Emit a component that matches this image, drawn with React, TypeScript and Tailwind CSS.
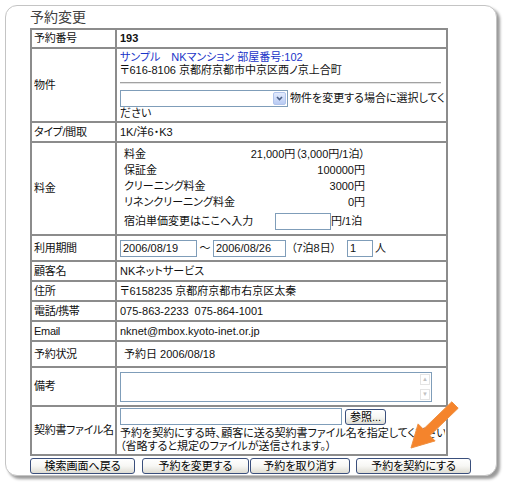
import type { ReactNode } from 'react';

const Btn = ({ children, className }: { children: ReactNode; className: string }) => (
  <button
    className={`h-[16px] shrink-0 whitespace-nowrap rounded-[3px] border border-[#3a4f7c] bg-linear-to-b from-white via-[#f7f7f4] to-[#dedcd3] text-[11px] leading-[14px] text-black ${className}`}
  >
    {children}
  </button>
);

const Row = ({
  label,
  h,
  valueClass,
  children,
}: {
  label: string;
  h: string;
  valueClass?: string;
  children: ReactNode;
}) => (
  <tr>
    <td className={`${h} w-[85px] whitespace-nowrap border border-[#8c8c8c] px-[2px] align-middle tracking-[-0.3px]`}>{label}</td>
    <td className={`border border-[#8c8c8c] px-[3px] ${valueClass ?? 'align-middle'}`}>{children}</td>
  </tr>
);

const fees = [
  ['料金', '21,000円（3,000円/1泊）'],
  ['保証金', '100000円'],
  ['クリーニング料金', '3000円'],
  ['リネンクリーニング料金', '0円'],
];

const inputCls = 'h-[17px] shrink-0 border border-[#7f9db9] bg-white px-[2px] text-[11px] leading-[15px] outline-none';

const App = () => {
  return (
    <div className="relative h-[484px] w-[505px] overflow-hidden bg-white pl-[5px] pt-[5px] font-['Liberation_Sans','Noto_Sans_CJK_JP',sans-serif] text-[11px] leading-[13px] text-[#111] [font-feature-settings:'palt']">
      <div className="h-[471px] w-[492px] rounded-[12px] border border-[#c4c4c4] bg-white pl-[24px] shadow-[3px_3px_3px_#9a9a9a]">
        <div className="h-[22px] text-[14px] leading-[22px] text-[#404040]">予約変更</div>

        <table className="w-[418px] table-fixed border-separate border-spacing-0 border border-[#8c8c8c]">
          <tbody>
            <Row label="予約番号" h="h-[19px]">
              <span className="font-bold">193</span>
            </Row>
            <Row label="物件" h="h-[74px]" valueClass="align-top pt-[2px]">
              <div className="text-[#1a34c8]">サンプル　NKマンション 部屋番号:102</div>
              <div>〒616-8106 京都府京都市中京区西ノ京上合町</div>
              <div className="mt-[5px] mr-[2px] border-t border-b border-t-[#a2a2a2] border-b-[#e2e2e2]" />
              <div className="mt-[6px] flex items-center whitespace-nowrap">
                <div className="flex h-[17px] w-[168px] shrink-0 border border-[#7f9db9] bg-white">
                  <div className="flex-1" />
                  <div className="m-px flex w-[13px] items-center justify-center rounded-[2px] border border-[#b1c4ec] bg-linear-to-b from-[#e3ebfd] to-[#b9cbf3]">
                    <svg width="7" height="5" viewBox="0 0 7 5">
                      <path d="M1 1 L3.5 3.6 L6 1" fill="none" stroke="#4a5f86" strokeWidth="1.6" />
                    </svg>
                  </div>
                </div>
                <span className="ml-[2px]">物件を変更する場合に選択してく</span>
              </div>
              <div>ださい</div>
            </Row>
            <Row label="タイプ/間取" h="h-[20px]">
              1K/洋6・K3
            </Row>
            <Row label="料金" h="h-[93px]">
              <div className="ml-[4px] flex flex-col whitespace-nowrap">
                {fees.map(([k, v]) => (
                  <div key={k} className="flex h-[16px] items-center">
                    <span className="w-[127px] shrink-0">{k}</span>
                    <span className="flex w-[114px] shrink-0 justify-end">{v}</span>
                  </div>
                ))}
                <div className="mt-[1px] flex h-[19px] items-center">
                  <span className="w-[127px] shrink-0">宿泊単価変更はここへ入力</span>
                  <input readOnly className={`${inputCls} ml-[24px] w-[56px]`} />
                  <span>円/1泊</span>
                </div>
              </div>
            </Row>
            <Row label="利用期間" h="h-[26px]">
              <div className="flex items-center whitespace-nowrap">
                <input readOnly value="2006/08/19" className={`${inputCls} w-[77px]`} />
                <span className="w-[16px] shrink-0 text-center">～</span>
                <input readOnly value="2006/08/26" className={`${inputCls} w-[73px]`} />
                <span className="w-[61px] shrink-0 pl-[5px]">（7泊8日）</span>
                <input readOnly value="1" className={`${inputCls} w-[26px]`} />
                <span className="ml-[2px]">人</span>
              </div>
            </Row>
            <Row label="顧客名" h="h-[20px]">
              NKネットサービス
            </Row>
            <Row label="住所" h="h-[20px]">
              〒6158235 京都府京都市右京区太秦
            </Row>
            <Row label="電話/携帯" h="h-[20px]">
              075-863-2233&nbsp;&nbsp;075-864-1001
            </Row>
            <Row label="Email" h="h-[20px]">
              nknet@mbox.kyoto-inet.or.jp
            </Row>
            <Row label="予約状況" h="h-[26px]">
              <span className="pl-[4px]">予約日 2006/08/18</span>
            </Row>
            <Row label="備考" h="h-[39px]">
              <div className="flex h-[30px] w-[312px] justify-end border border-[#7f9db9] bg-white">
                <div className="flex w-[12px] flex-col justify-between p-px">
                  <div className="flex h-[11px] items-center justify-center border border-[#e4e4e4] text-[6px] leading-none text-[#c2c2c2]">▲</div>
                  <div className="flex h-[11px] items-center justify-center border border-[#e4e4e4] text-[6px] leading-none text-[#c2c2c2]">▼</div>
                </div>
              </div>
            </Row>
            <Row label="契約書ファイル名" h="h-[49px]">
              <div className="flex items-center">
                <input readOnly className={`${inputCls} w-[222px] h-[15px]`} />
                <Btn className="ml-[3px] w-[41px]">参照...</Btn>
              </div>
              <div className="mt-[2px] w-[325px] overflow-hidden whitespace-nowrap">
                予約を契約にする時、顧客に送る契約書ファイル名を指定してください
              </div>
              <div className="whitespace-nowrap">（省略すると規定のファイルが送信されます。）</div>
            </Row>
          </tbody>
        </table>

        <div className="mt-[2px] flex">
          <Btn className="w-[105px]">検索画面へ戻る</Btn>
          <Btn className="ml-[7px] w-[107px]">予約を変更する</Btn>
          <Btn className="ml-[1px] w-[100px]">予約を取り消す</Btn>
          <Btn className="ml-[6px] w-[115px]">予約を契約にする</Btn>
        </div>
      </div>

      <svg className="pointer-events-none absolute left-0 top-0" width="505" height="484">
        <polygon
          points="451.8,401.8 423.4,429.2 418.1,423.9 411,448 435.1,440.9 429.8,435.6 458.2,408.2"
          fill="#f5842c"
          stroke="#f09040"
          strokeWidth="1"
          strokeLinejoin="round"
        />
      </svg>
    </div>
  );
};

export default App;
